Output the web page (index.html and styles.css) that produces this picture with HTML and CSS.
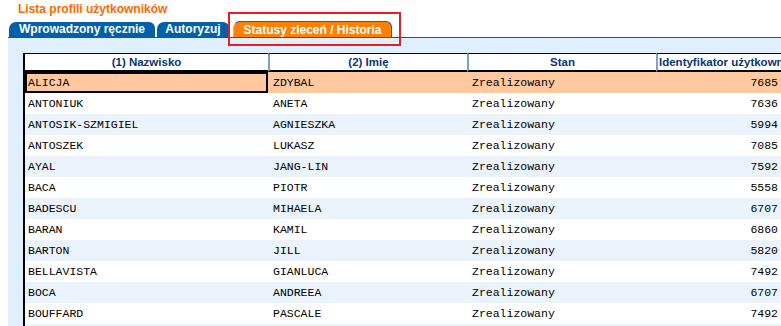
FILE: index.html
```
<!DOCTYPE html>
<html lang="pl">
<head>
<meta charset="utf-8">
<title>Lista profili użytkowników</title>
<link rel="stylesheet" href="styles.css">
</head>
<body>
	<div class="page">
		<h1 class="title">Lista profili użytkowników</h1>
		<div class="tabs">
			<a class="tab t1">Wprowadzony ręcznie</a>
			<a class="tab t2">Autoryzuj</a>
			<a class="tab t3 active">Statusy zleceń / Historia</a>
			<span class="mark"></span>
		</div>
		<div class="panel">
			<table class="grid">
				<colgroup>
					<col class="c1"><col class="c2"><col class="c3"><col class="c4">
				</colgroup>
				<thead>
					<tr>
						<th>(1) Nazwisko</th>
						<th class="sep">(2) Imię</th>
						<th class="sep">Stan</th>
						<th class="sep id">Identyfikator użytkown</th>
					</tr>
				</thead>
				<tbody>
					<tr class="odd sel"><td class="cur">ALICJA</td><td>ZDYBAL</td><td>Zrealizowany</td><td class="num">7685</td></tr>
					<tr><td>ANTONIUK</td><td>ANETA</td><td>Zrealizowany</td><td class="num">7636</td></tr>
					<tr class="odd"><td>ANTOSIK-SZMIGIEL</td><td>AGNIESZKA</td><td>Zrealizowany</td><td class="num">5994</td></tr>
					<tr><td>ANTOSZEK</td><td>LUKASZ</td><td>Zrealizowany</td><td class="num">7085</td></tr>
					<tr class="odd"><td>AYAL</td><td>JANG-LIN</td><td>Zrealizowany</td><td class="num">7592</td></tr>
					<tr><td>BACA</td><td>PIOTR</td><td>Zrealizowany</td><td class="num">5558</td></tr>
					<tr class="odd"><td>BADESCU</td><td>MIHAELA</td><td>Zrealizowany</td><td class="num">6707</td></tr>
					<tr><td>BARAN</td><td>KAMIL</td><td>Zrealizowany</td><td class="num">6860</td></tr>
					<tr class="odd"><td>BARTON</td><td>JILL</td><td>Zrealizowany</td><td class="num">5820</td></tr>
					<tr><td>BELLAVISTA</td><td>GIANLUCA</td><td>Zrealizowany</td><td class="num">7492</td></tr>
					<tr class="odd"><td>BOCA</td><td>ANDREEA</td><td>Zrealizowany</td><td class="num">6707</td></tr>
					<tr><td>BOUFFARD</td><td>PASCALE</td><td>Zrealizowany</td><td class="num">7492</td></tr>
					<tr class="odd"><td></td><td></td><td></td><td></td></tr>
				</tbody>
			</table>
		</div>
	</div>
</body>
</html>
```
FILE: styles.css
```
*{ margin:0; padding:0; box-sizing:border-box; }
html,body{ overflow:hidden; background:#fff; }
body{ font-family:"Liberation Sans", Arial, sans-serif; height:326px; }

.page{ padding-left:8px; }
.title{ font-size:12px; font-weight:bold; color:#ff6600; padding-left:10px; line-height:14px; padding-top:2px; height:21px; }

.tabs{ position:relative; display:flex; align-items:flex-end; height:17px; border-bottom:1px solid #0061aa; padding-left:1px; }
.tab{ display:block; height:15px; line-height:15px; font-size:12px; font-weight:bold; color:#fff; text-align:center; background:#0061aa; border-radius:7px 6px 0 0; white-space:nowrap; }
.t1{ width:146px; }
.t2{ width:72px; margin-left:2px; }
.t3{ width:159px; margin-left:4px; }
.tab.active{ background:#ff8000; height:16px; line-height:16px; border:1px solid #2a5d96; border-bottom:none; border-left-color:#ffb060; }
.mark{ position:absolute; left:220px; top:-9px; width:173px; height:34px; border:2px solid #e41e26; }

.panel{ background:#e0effd; padding:15px 0 0 15px; height:300px; }

.grid{ table-layout:fixed; width:758px; border-collapse:separate; border-spacing:0; border-left:2px solid #000; font-family:"Liberation Mono", "Courier New", monospace; font-size:11.5px; }
.c1{ width:243px; } .c2{ width:199px; } .c3{ width:189px; } .c4{ width:125px; }

.grid th{ height:19px; background:#fff; border-top:1px solid #000; border-bottom:2px solid #000; font-family:"Liberation Sans", Arial, sans-serif; font-size:11.5px; font-weight:bold; color:#0a347a; text-align:center; white-space:nowrap; overflow:hidden; padding:0; }
.grid th.sep{ border-left:2px solid #7ba3c4; }
.grid th.id{ text-align:left; padding-left:1px; overflow:visible; }

.grid td{ height:21px; padding:0 0 0 5px; background:#fff; white-space:nowrap; overflow:hidden; color:#000; }
.grid td:first-child{ padding-left:3px; }
.grid tr.odd td{ background:#eaf3fb; }
.grid tr.sel td{ background:#ffc89e; }
.grid td.cur{ outline:2px solid #000; outline-offset:-2px; padding-left:3px; }
.grid td.num{ text-align:right; padding-right:3px; }
```
